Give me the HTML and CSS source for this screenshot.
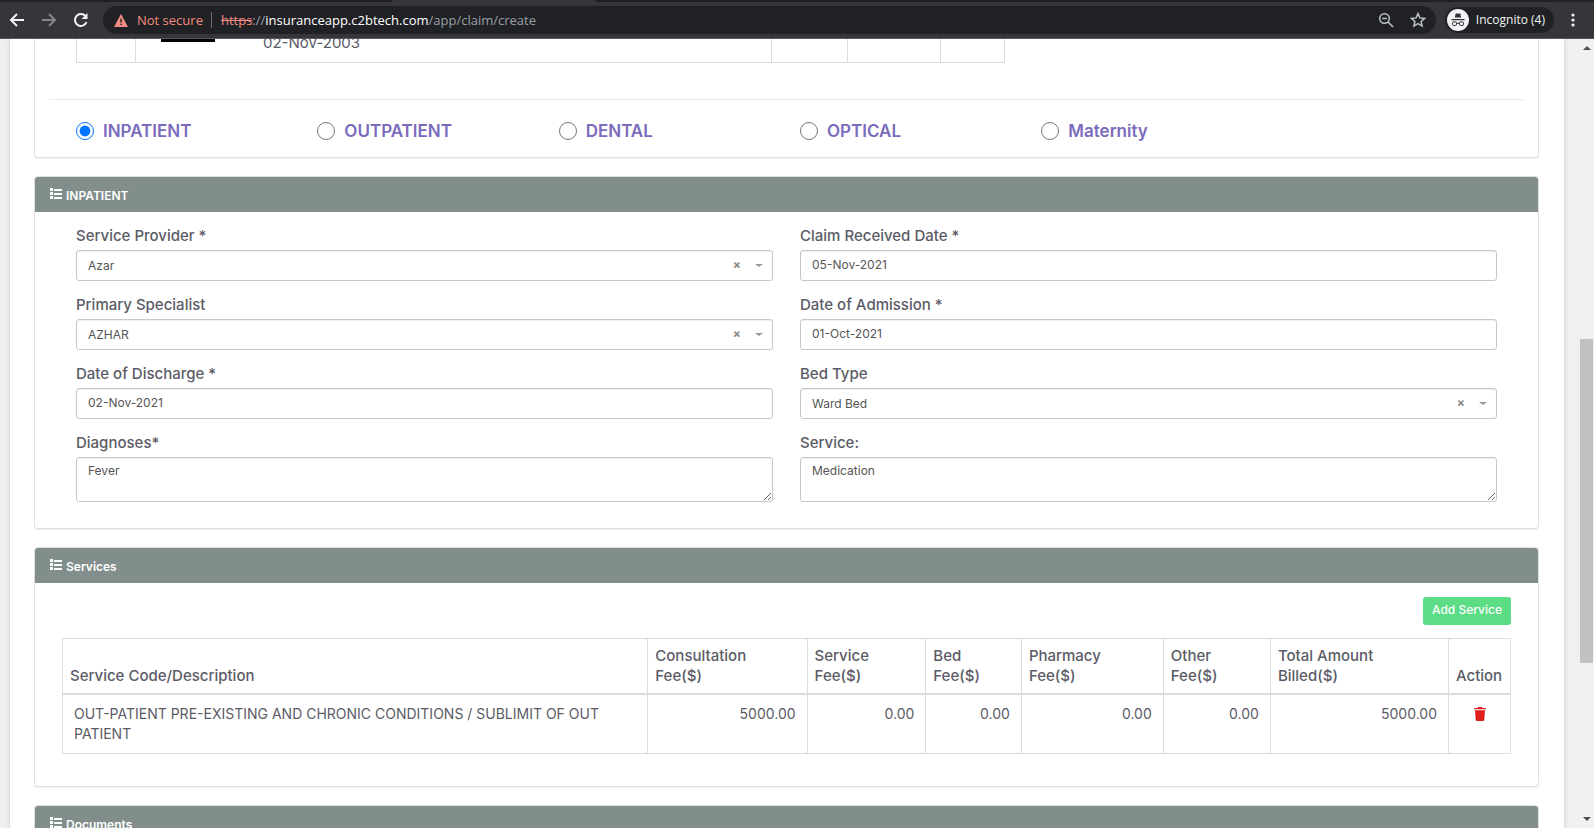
FILE: index.html
```html
<!DOCTYPE html>
<html lang="en">
<head>
<meta charset="utf-8">
<title>Create claim</title>
<link rel="stylesheet" href="styles.css">
</head>
<body>
<svg class="defs" aria-hidden="true">
  <symbol id="list" viewBox="0 0 12 12"><path d="M0 0h3v3H0zM0 4h3v3H0zM0 8h3v3H0zM4 1h8v2H4zM4 5h8v2H4zM4 9h8v2H4z"/></symbol>
</svg>
<header class="browser">
  <div class="tabstrip"><span class="tab-left"></span><span class="tab-active"></span><span class="tab-right"></span></div>
  <div class="toolbar">
    <button class="nav" aria-label="Back"><svg viewBox="0 0 16 16"><path d="M15 8H2M8 2L2 8l6 6"/></svg></button>
    <button class="nav nav-off" aria-label="Forward"><svg viewBox="0 0 16 16"><path d="M1 8h13M8 2l6 6-6 6"/></svg></button>
    <button class="nav" aria-label="Reload"><svg viewBox="0 0 16 16"><path d="M13.500 10.200A6 6 0 1 1 12.500 4"/><path d="M14.500 1v6h-6z" class="solid"/></svg></button>
    <div class="omnibox">
      <svg class="warn" viewBox="0 0 14 13"><path d="M7 0l7 13H0z" fill="#f28b82"/><path d="M6.300 4.500h1.400v4H6.300zM6.300 9.700h1.400v1.400H6.300z" fill="#202124"/></svg>
      <span class="insecure">Not secure</span>
      <span class="bar"></span>
      <span class="url"><s>https</s>://<b>insuranceapp.c2btech.com</b>/app/claim/create</span>
      <button class="tool" aria-label="Zoom"><svg viewBox="0 0 16 16"><circle cx="6.500" cy="6.500" r="4.800"/><path d="M10 10l5 5M4.200 6.500h4.600"/></svg></button>
      <button class="tool" aria-label="Bookmark"><svg viewBox="0 0 16 16"><path d="M8 1.600l1.900 4.300 4.700.5-3.500 3.100 1 4.600L8 11.700l-4.100 2.400 1-4.600L1.400 6.400l4.700-.5z"/></svg></button>
    </div>
    <button class="profile">
      <svg viewBox="0 0 22 22"><circle cx="11" cy="11" r="11" fill="#f1f3f4"/><g fill="#303134"><path d="M7.800 8.600l1-4.300 2.200.5 2.200-.5 1 4.300z"/><path d="M4.500 10h13v1.200h-13z"/></g><g fill="none" stroke="#303134"><rect x="5.500" y="12.800" width="4" height="3.700" rx="1.300"/><rect x="12.500" y="12.800" width="4" height="3.700" rx="1.300"/><path d="M9.500 14.300h3"/></g></svg>
      <span>Incognito (4)</span>
    </button>
    <button class="more" aria-label="Menu"><svg viewBox="0 0 4 14"><circle cx="2" cy="2" r="1.600"/><circle cx="2" cy="7" r="1.600"/><circle cx="2" cy="12" r="1.600"/></svg></button>
  </div>
</header>
<div class="viewport">
  <main class="page">
    <section class="card card-top">
      <table class="members">
        <tr><td class="m-check"></td><td class="m-info"><span class="redacted"></span><span class="dob">02-Nov-2003</span></td><td class="m-a"></td><td class="m-b"></td><td class="m-c"></td></tr>
      </table>
      <hr>
      <div class="types">
        <label><input type="radio" name="type" checked>INPATIENT</label>
        <label><input type="radio" name="type">OUTPATIENT</label>
        <label><input type="radio" name="type">DENTAL</label>
        <label><input type="radio" name="type">OPTICAL</label>
        <label><input type="radio" name="type">Maternity</label>
      </div>
    </section>

    <section class="card">
      <h2><svg><use href="#list"/></svg>INPATIENT</h2>
      <form class="fields">
        <div class="field"><label for="provider">Service Provider *</label>
          <div class="pick"><select id="provider"><option>Azar</option></select><button type="button" aria-label="Clear">×</button></div></div>
        <div class="field"><label for="received">Claim Received Date *</label><input id="received" type="text" value="05-Nov-2021"></div>
        <div class="field"><label for="specialist">Primary Specialist</label>
          <div class="pick"><select id="specialist"><option>AZHAR</option></select><button type="button" aria-label="Clear">×</button></div></div>
        <div class="field"><label for="admission">Date of Admission *</label><input id="admission" type="text" value="01-Oct-2021"></div>
        <div class="field"><label for="discharge">Date of Discharge *</label><input id="discharge" type="text" value="02-Nov-2021"></div>
        <div class="field"><label for="bed">Bed Type</label>
          <div class="pick"><select id="bed"><option>Ward Bed</option></select><button type="button" aria-label="Clear">×</button></div></div>
        <div class="field"><label for="diagnoses">Diagnoses*</label><textarea id="diagnoses">Fever</textarea></div>
        <div class="field"><label for="service">Service:</label><textarea id="service">Medication</textarea></div>
      </form>
    </section>

    <section class="card">
      <h2><svg><use href="#list"/></svg>Services</h2>
      <div class="services">
        <button class="add">Add Service</button>
        <table class="fees">
          <colgroup><col class="c-desc"><col class="c-consult"><col class="c-service"><col class="c-bed"><col class="c-pharm"><col class="c-other"><col class="c-total"><col class="c-action"></colgroup>
          <thead><tr><th>Service Code/Description</th><th>Consultation<br>Fee($)</th><th>Service<br>Fee($)</th><th>Bed<br>Fee($)</th><th>Pharmacy<br>Fee($)</th><th>Other<br>Fee($)</th><th>Total Amount<br>Billed($)</th><th>Action</th></tr></thead>
          <tbody><tr><td>OUT-PATIENT PRE-EXISTING AND CHRONIC CONDITIONS / SUBLIMIT OF OUT PATIENT</td><td>5000.00</td><td>0.00</td><td>0.00</td><td>0.00</td><td>0.00</td><td>5000.00</td><td><button class="trash" aria-label="Delete"><svg viewBox="0 0 12 14"><path d="M0 1h3.500L4 0h4l.5 1H12v1.300H0zM1 3.200h10l-.7 9.600c0 .7-.5 1.200-1.200 1.200H2.900c-.7 0-1.200-.5-1.200-1.200z"/></svg></button></td></tr></tbody>
        </table>
      </div>
    </section>

    <section class="card">
      <h2><svg><use href="#list"/></svg>Documents</h2>
      <div class="services"></div>
    </section>
  </main>
  <div class="scroll" aria-hidden="true">
    <svg viewBox="0 0 8 4"><path d="M0 4h8L4 0z"/></svg>
    <div class="track"><span class="before"></span><span class="thumb"></span><span class="after"></span></div>
    <svg viewBox="0 0 8 4"><path d="M0 0h8L4 4z"/></svg>
  </div>
</div>
</body>
</html>
```

FILE: styles.css
```css
* { box-sizing: border-box; }
body { margin: 0; height: 100vh; display: flex; flex-direction: column; overflow: hidden; background: #f0f0f0; color: #5b5b66; font: 13px/20px Inter, "Open Sans", sans-serif; }
button { border: 0; padding: 0; background: none; font: inherit; color: inherit; }
.defs { display: none; }

/* Browser frame */
.browser { flex: none; background: #35363a; border-bottom: 1px solid #5a5660; font-family: "Open Sans", sans-serif; font-size: 13px; }
.tabstrip { display: flex; height: 2px; background: #35363a; }
.tab-left { width: 393px; background: #202124; border-bottom-right-radius: 2px; }
.tab-active { width: 202px; }
.tab-right { flex: 1; background: #202124; border-bottom-left-radius: 2px; }
.toolbar { display: flex; align-items: center; height: 36px; padding: 0 19px 0 9px; }
.nav { width: 16px; height: 16px; margin-right: 16px; }
.nav svg { display: block; width: 16px; height: 16px; fill: none; stroke: #f1f3f4; stroke-width: 2; }
.nav .solid { fill: #f1f3f4; stroke: none; }
.nav-off svg { stroke: #85868a; }
.omnibox { flex: 1; display: flex; align-items: center; height: 28px; margin-left: -2px; margin-right: 9px; padding: 0 10px 0 11px; border-radius: 14px; background: #202124; }
.warn { width: 14px; height: 13px; margin-right: 9px; }
.insecure { color: #f28b82; }
.bar { width: 1px; height: 16px; margin: 0 9px 0 8px; background: #6b6c70; }
.url { flex: 1; color: #9aa0a6; }
.url s { color: #f28b82; }
.url b { color: #fff; font-weight: 400; }
.tool { width: 16px; height: 16px; margin-left: 16px; }
.tool svg { display: block; width: 16px; height: 16px; fill: none; stroke: #bdc1c6; stroke-width: 1.5; }
.profile { display: flex; align-items: center; gap: 7px; height: 26px; padding: 0 9px 0 2px; border-radius: 13px; background: #202124; color: #f1f3f4; font-size: 12px; font-weight: 500; }
.profile svg { width: 22px; height: 22px; }
.more { margin-left: 17px; }
.more svg { display: block; width: 4px; height: 14px; fill: #f1f3f4; }

/* Page */
.viewport { flex: 1; min-height: 0; display: flex; gap: 14px; overflow: hidden; }
.page { flex: 1; margin-left: 9px; padding: 0 25px 0 24px; background: #fff; border: solid #dcdcdc; border-width: 0 1px; box-shadow: 0 0 6px #ddd; }
.card { margin-bottom: 18px; background: #fff; border: 1px solid #e1dfe4; border-radius: 4px; box-shadow: 0 1px 1px #eee; }
.card h2 { display: flex; align-items: center; gap: 4px; height: 35px; margin: 0; padding: 3px 15px 0; border-radius: 3px 3px 0 0; background: #818e8c; color: #fff; font-size: 12px; font-weight: 600; }
.card h2 svg { width: 12px; height: 12px; margin-bottom: 4px; fill: #fff; }

.card-top { border-top: 0; border-radius: 0 0 4px 4px; }
.members { width: 929px; margin-left: 41px; border-collapse: collapse; table-layout: fixed; }
.members td { height: 23px; padding: 0; border: 1px solid #dcdcdc; border-top: 0; vertical-align: top; }
.m-check { width: 59px; }
.m-a { width: 76px; }
.m-b { width: 93px; }
.m-c { width: 64px; }
.redacted { float: left; width: 54px; height: 3px; margin: 0 48px 0 25px; background: #000; }
.dob { display: block; margin-top: -6px; font-size: 15px; }
.card hr { height: 1px; margin: 36px 14px 19px; border: 0; background: #ebebeb; }
.types { display: grid; grid-template-columns: repeat(6, 1fr); padding: 0 29px 14px 26px; }
.types label { display: flex; align-items: center; gap: 9px; padding-left: 15px; line-height: 24px; color: #7b6bbd; font-size: 17px; font-weight: 600; }
.types input { width: 18px; height: 18px; margin: 0; accent-color: #0075ff; }

.fields { display: grid; grid-template-columns: 1fr 1fr; column-gap: 27px; row-gap: 13px; padding: 13px 41px 26px; }
.field { display: flex; flex-direction: column; gap: 3px; font-size: 15px; font-weight: 500; line-height: 22px; }
.field input, .field select, .field textarea { width: 100%; height: 31px; margin: 0; padding: 0 11px; border: 1px solid #c8c8c8; border-radius: 3px; background: #fff; box-shadow: inset 0 1px 1px #eee; color: #555; font: 12px/18px Inter, "Open Sans", sans-serif; }
.field input { padding-bottom: 2px; }
.field textarea { height: 45px; padding-top: 4px; }
.field select { appearance: none; padding-top: 2px; }
.pick { position: relative; height: 31px; }
.pick button { position: absolute; top: 4px; right: 32px; color: #888; font-size: 12px; font-weight: 700; }
.pick::after { content: ""; position: absolute; top: 14px; right: 10px; border: solid transparent; border-width: 3px 4px 0; border-top-color: #999; }

.services { padding: 14px 27px 32px; }
.add { display: block; height: 28px; margin: 0 0 13px auto; padding: 0 9px 2px; border-radius: 3px; background: #5bdc85; color: #fff; font-size: 12px; font-weight: 500; }
.fees { width: 100%; border-collapse: collapse; table-layout: fixed; font-size: 14px; }
.fees th, .fees td { border: 1px solid #dcdcdc; }
.fees th { padding: 7px; border-bottom-width: 2px; font-size: 15px; font-weight: 500; text-align: left; vertical-align: bottom; white-space: nowrap; }
.fees td { padding: 9px 11px; height: 59px; text-align: right; vertical-align: top; }
.fees td:first-child { text-align: left; }
.fees td:last-child { text-align: center; }
.c-consult { width: 11%; }
.c-service { width: 8.200%; }
.c-bed { width: 6.600%; }
.c-pharm { width: 9.800%; }
.c-other { width: 7.400%; }
.c-total { width: 12.300%; }
.c-action { width: 62px; }
.trash svg { display: block; width: 12px; height: 14px; margin-top: 3px; fill: #e02020; }

/* Scroll bar */
.scroll { width: 15px; display: flex; flex-direction: column; align-items: center; padding: 7px 0; background: #f1f1f1; }
.scroll svg { width: 8px; height: 4px; fill: #505050; }
.track { flex: 1; align-self: stretch; display: flex; flex-direction: column; margin: 5px 1px; }
.before { flex: 284; }
.thumb { flex: 324; background: #c1c1c1; }
.after { flex: 149; }
```
